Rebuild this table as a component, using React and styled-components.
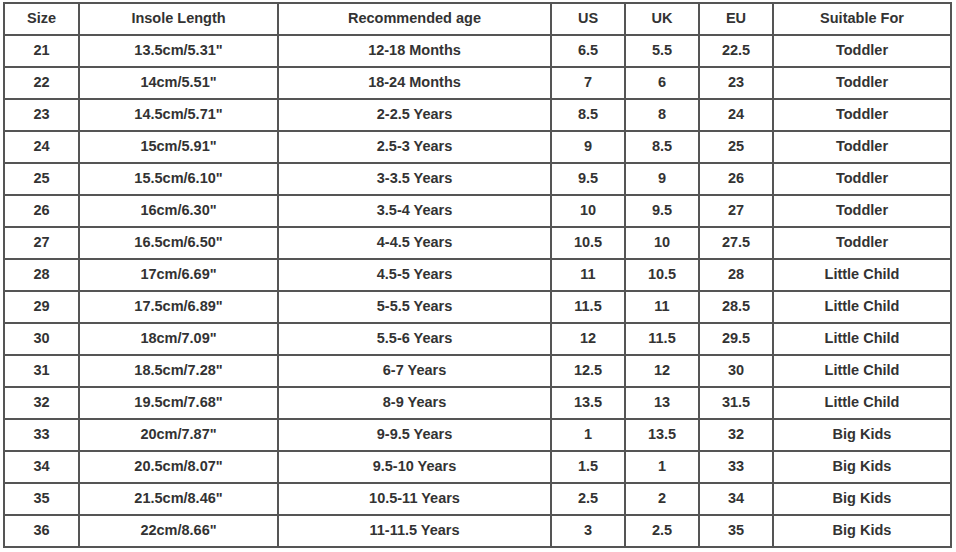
import styled, { createGlobalStyle } from 'styled-components'

const GlobalStyle = createGlobalStyle`
  body {
    margin: 0;
    background: #ffffff;
    font-family: "Liberation Sans", Arial, sans-serif;
  }
`

const Page = styled.div`
  padding: 2px 0 0 3px;
`

const Table = styled.table`
  border-collapse: collapse;
  table-layout: fixed;
  width: 949px;
  color: #333333;
  font-size: 14.5px;
  font-weight: bold;
`

const Row = styled.tr`
  height: 32px;
`

const Cell = styled.td`
  border: 2px solid #555555;
  text-align: center;
  vertical-align: middle;
  padding: 0 0 3px 0;
  line-height: 16px;
`

const HeadCell = styled(Cell).attrs({ as: 'th' })`
  font-weight: bold;
`

const widths = [75, 199, 273, 74, 74, 74, 178]

const headers = ['Size', 'Insole Length', 'Recommended age', 'US', 'UK', 'EU', 'Suitable For']

const rows = [
  ['21', '13.5cm/5.31"', '12-18 Months', '6.5', '5.5', '22.5', 'Toddler'],
  ['22', '14cm/5.51"', '18-24 Months', '7', '6', '23', 'Toddler'],
  ['23', '14.5cm/5.71"', '2-2.5 Years', '8.5', '8', '24', 'Toddler'],
  ['24', '15cm/5.91"', '2.5-3 Years', '9', '8.5', '25', 'Toddler'],
  ['25', '15.5cm/6.10"', '3-3.5 Years', '9.5', '9', '26', 'Toddler'],
  ['26', '16cm/6.30"', '3.5-4 Years', '10', '9.5', '27', 'Toddler'],
  ['27', '16.5cm/6.50"', '4-4.5 Years', '10.5', '10', '27.5', 'Toddler'],
  ['28', '17cm/6.69"', '4.5-5 Years', '11', '10.5', '28', 'Little Child'],
  ['29', '17.5cm/6.89"', '5-5.5 Years', '11.5', '11', '28.5', 'Little Child'],
  ['30', '18cm/7.09"', '5.5-6 Years', '12', '11.5', '29.5', 'Little Child'],
  ['31', '18.5cm/7.28"', '6-7 Years', '12.5', '12', '30', 'Little Child'],
  ['32', '19.5cm/7.68"', '8-9 Years', '13.5', '13', '31.5', 'Little Child'],
  ['33', '20cm/7.87"', '9-9.5 Years', '1', '13.5', '32', 'Big Kids'],
  ['34', '20.5cm/8.07"', '9.5-10 Years', '1.5', '1', '33', 'Big Kids'],
  ['35', '21.5cm/8.46"', '10.5-11 Years', '2.5', '2', '34', 'Big Kids'],
  ['36', '22cm/8.66"', '11-11.5 Years', '3', '2.5', '35', 'Big Kids'],
]

export default function App() {
  return (
    <>
      <GlobalStyle />
      <Page>
        <Table>
          <colgroup>
            {widths.map((w, i) => (
              <col key={i} style={{ width: w }} />
            ))}
          </colgroup>
          <thead>
            <Row>
              {headers.map((h) => (
                <HeadCell key={h}>{h}</HeadCell>
              ))}
            </Row>
          </thead>
          <tbody>
            {rows.map((r) => (
              <Row key={r[0]}>
                {r.map((v, i) => (
                  <Cell key={i}>{v}</Cell>
                ))}
              </Row>
            ))}
          </tbody>
        </Table>
      </Page>
    </>
  )
}
